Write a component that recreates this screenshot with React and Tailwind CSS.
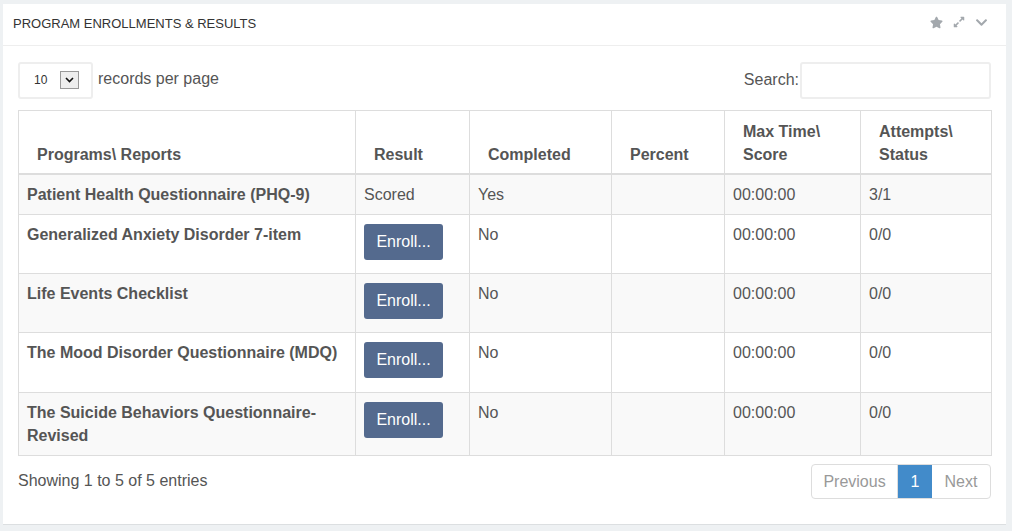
import React from "react";
import { FaStar, FaExpandAlt, FaChevronDown } from "react-icons/fa";

const rows = [
  { name: "Patient Health Questionnaire (PHQ-9)", result: "Scored", completed: "Yes", time: "00:00:00", att: "3/1", h: "h-[41px]", bg: "bg-[#f9f9f9]" },
  { name: "Generalized Anxiety Disorder 7-item", enroll: true, completed: "No", time: "00:00:00", att: "0/0", h: "h-[59px]", bg: "bg-white" },
  { name: "Life Events Checklist", enroll: true, completed: "No", time: "00:00:00", att: "0/0", h: "h-[59px]", bg: "bg-[#f9f9f9]" },
  { name: "The Mood Disorder Questionnaire (MDQ)", enroll: true, completed: "No", time: "00:00:00", att: "0/0", h: "h-[60px]", bg: "bg-white" },
  { name: "The Suicide Behaviors Questionnaire-Revised", enroll: true, completed: "No", time: "00:00:00", att: "0/0", h: "h-[63px]", bg: "bg-[#f9f9f9]" },
];

export default function App() {
  const td = "align-top border border-[#dddddd] pl-[8px] pr-[8px] pt-[8px] pb-[8px] leading-[23px]";
  const th = "align-bottom border border-[#dddddd] border-b-2 pl-[18px] pr-[8px] pt-[7px] pb-[7px] leading-[23px] text-left font-bold";
  return (
    <div className="w-[1012px] h-[531px] bg-[#eef1f3] pt-[4px] pl-[3px] pr-[6px] overflow-hidden" style={{ fontFamily: '"Liberation Sans", Arial, sans-serif' }}>
      <div className="bg-white h-[521px] border-b border-[#dcdfe1] flex flex-col">
        <div className="h-[42px] border-b border-[#eeeeee] flex items-center justify-between pl-[10px] pr-[18px]">
          <span className="text-[13px] text-[#333333] mt-[-2px]">PROGRAM ENROLLMENTS &amp; RESULTS</span>
          <div className="flex items-center gap-[10px] text-[#a3a8ad] mt-[-5px]">
            <FaStar className="w-[13px] h-[13px]" />
            <FaExpandAlt className="w-[12px] h-[12px]" />
            <FaChevronDown className="w-[13px] h-[13px]" />
          </div>
        </div>
        <div className="px-[15px] pt-[16px] text-[16px] text-[#555555]">
          <div className="flex items-center justify-between h-[36px]">
            <div className="flex items-center">
              <div className="w-[75px] h-[37px] border-2 border-[#eeeeee] rounded-[3px] flex items-center pl-[14px]">
                <span className="text-[12px] text-[#333333] w-[26px]">10</span>
                <span className="w-[19px] h-[18px] border border-[#999999] bg-[#eeeeee] flex items-center justify-center">
                  <svg width="9" height="6" viewBox="0 0 9 6"><path d="M1 1 L4.5 4.5 L8 1" stroke="#111" strokeWidth="1.6" fill="none" /></svg>
                </span>
              </div>
              <span className="ml-[5px] mt-[-3px]">records per page</span>
            </div>
            <div className="flex items-center">
              <span className="mr-[1px] mt-[-1px]">Search:</span>
              <div className="w-[191px] h-[37px] border-2 border-[#eeeeee] rounded-[3px]" />
            </div>
          </div>
          <table className="mt-[12px] w-[973px] table-fixed border-collapse">
            <colgroup>
              <col className="w-[337px]" />
              <col className="w-[114px]" />
              <col className="w-[142px]" />
              <col className="w-[113px]" />
              <col className="w-[136px]" />
              <col className="w-[131px]" />
            </colgroup>
            <thead>
              <tr className="h-[63px]">
                <th className={th}>Programs\ Reports</th>
                <th className={th}>Result</th>
                <th className={th}>Completed</th>
                <th className={th}>Percent</th>
                <th className={th}>Max Time\<br />Score</th>
                <th className={th}>Attempts\<br />Status</th>
              </tr>
            </thead>
            <tbody>
              {rows.map((r, i) => (
                <tr key={i} className={`${r.h} ${r.bg}`}>
                  <td className={`${td} font-bold`}>{r.name}</td>
                  <td className={td}>
                    {r.enroll ? (
                      <div className="w-[79px] h-[36px] mt-[1px] rounded-[3px] bg-[#546a8e] text-white flex items-center justify-center pb-[2px]">Enroll...</div>
                    ) : (
                      r.result
                    )}
                  </td>
                  <td className={td}>{r.completed}</td>
                  <td className={td}></td>
                  <td className={td}>{r.time}</td>
                  <td className={td}>{r.att}</td>
                </tr>
              ))}
            </tbody>
          </table>
          <div className="flex items-start justify-between mt-[8px]">
            <span className="mt-[5px]">Showing 1 to 5 of 5 entries</span>
            <div className="flex h-[35px] border border-[#dddddd] rounded-[4px] overflow-hidden text-[#999999]">
              <span className="w-[86px] flex items-center justify-center border-r border-[#dddddd]">Previous</span>
              <span className="w-[34px] flex items-center justify-center bg-[#428bca] text-white">1</span>
              <span className="w-[58px] flex items-center justify-center">Next</span>
            </div>
          </div>
        </div>
      </div>
    </div>
  );
}
